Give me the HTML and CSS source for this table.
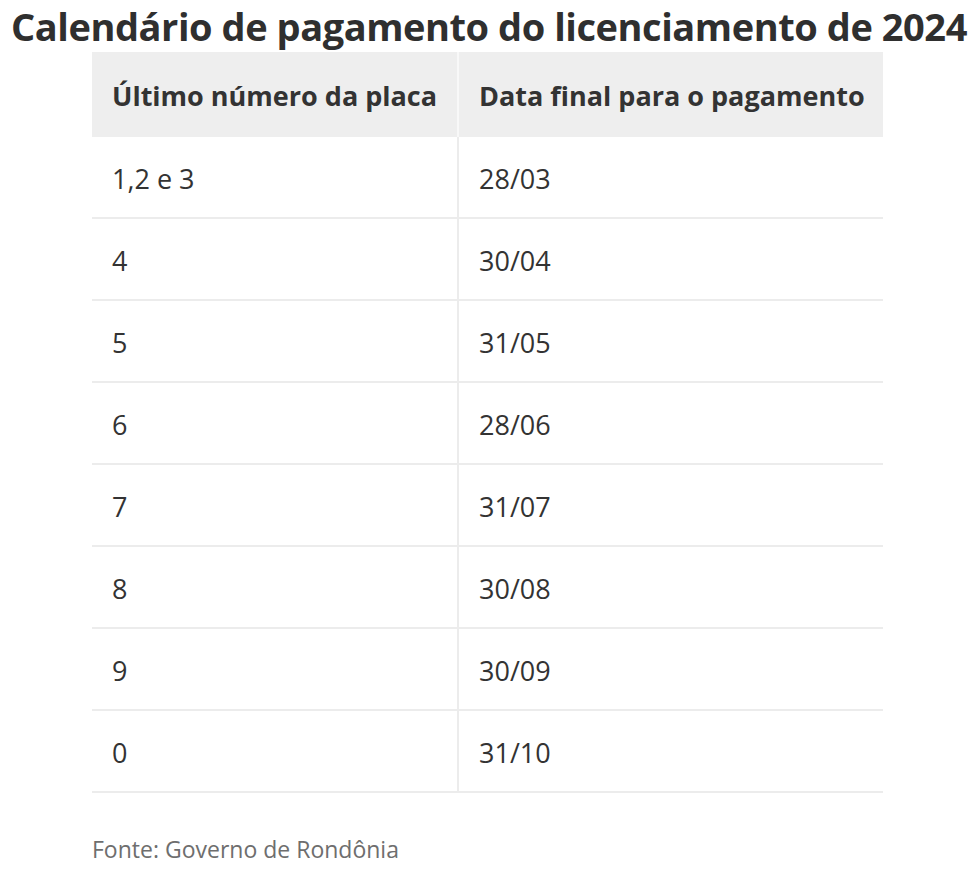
FILE: index.html
```html
<!DOCTYPE html>
<html lang="pt-BR">
<head>
<meta charset="utf-8">
<title>Calendário de pagamento do licenciamento de 2024</title>
<link rel="stylesheet" href="styles.css">
</head>
<body>
<div class="page">
  <h1 class="title">Calendário de pagamento do licenciamento de 2024</h1>
  <table class="calendar">
    <thead>
      <tr>
        <th class="col-a">Último número da placa</th>
        <th class="col-b">Data final para o pagamento</th>
      </tr>
    </thead>
    <tbody>
      <tr><td class="col-a">1,2 e 3</td><td class="col-b">28/03</td></tr>
      <tr><td class="col-a">4</td><td class="col-b">30/04</td></tr>
      <tr><td class="col-a">5</td><td class="col-b">31/05</td></tr>
      <tr><td class="col-a">6</td><td class="col-b">28/06</td></tr>
      <tr><td class="col-a">7</td><td class="col-b">31/07</td></tr>
      <tr><td class="col-a">8</td><td class="col-b">30/08</td></tr>
      <tr><td class="col-a">9</td><td class="col-b">30/09</td></tr>
      <tr><td class="col-a">0</td><td class="col-b">31/10</td></tr>
    </tbody>
  </table>
  <p class="source">Fonte: Governo de Rondônia</p>
</div>
</body>
</html>
```
FILE: styles.css
```css
html, body {
  margin: 0;
  padding: 0;
  background: #ffffff;
}
body {
  font-family: "Open Sans", "Liberation Sans", sans-serif;
  color: #333333;
}
.page {
  width: 978px;
}
.title {
  margin: 0;
  padding-top: 2px;
  font-size: 38px;
  font-weight: 700;
  line-height: 48px;
  text-align: center;
  letter-spacing: -0.45px;
  color: #2f2f2f;
  white-space: nowrap;
}
.calendar {
  margin: 2px 0 0 92px;
  width: 791px;
  border-collapse: collapse;
  table-layout: fixed;
}
.calendar th,
.calendar td {
  text-align: left;
  padding: 2px 20px 0;
  height: 78px;
  font-size: 27px;
  white-space: nowrap;
  border-bottom: 2px solid #ececec;
}
.calendar th {
  height: 83px;
  padding-top: 2px;
  background: #eeeeee;
  font-weight: 700;
  color: #333333;
  border-bottom: none;
}
.calendar td {
  font-weight: 400;
  color: #333333;
}
.calendar .col-a {
  width: 325px;
  border-right: 2px solid #ececec;
}
.calendar th.col-a {
  border-right: 2px solid #f8f8f8;
}
.source {
  margin: 40px 0 0 92px;
  font-size: 23px;
  color: #6e6e6e;
}
```
